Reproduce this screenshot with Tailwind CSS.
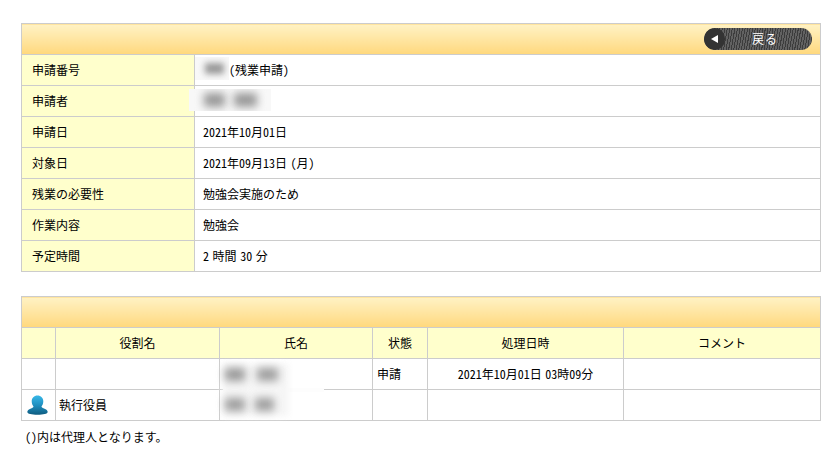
<!DOCTYPE html>
<html lang="ja">

<head>
    <meta charset="UTF-8" />
    <title>申請詳細</title>
    <script src="https://cdn.jsdelivr.net/npm/@tailwindcss/browser@4"></script>
</head>

<body class="bg-white text-black text-[12px] leading-[14px] [word-spacing:-2.4px] [font-family:'Noto_Sans_CJK_JP','Liberation_Sans',sans-serif] [font-feature-settings:'hwid']">
    <div class="w-[839px] h-[473px] overflow-hidden pt-[23px] pl-[21px]">
        <table class="w-[800px] table-fixed border-collapse">
            <colgroup>
                <col class="w-[173px]" />
                <col />
            </colgroup>
            <tr>
                <td colspan="2" class="h-[31px] p-0 border border-[#ccc] bg-gradient-to-b from-[#fff2c4] to-[#ffd87c]">
                    <div class="flex justify-end pr-[8px]">
                        <a class="flex w-[108px] h-[22px] rounded-full overflow-hidden bg-[#555] bg-[repeating-linear-gradient(100deg,#3c3c3c_0,#3c3c3c_1px,#626262_1px,#626262_2.5px)] text-white">
                            <span class="flex items-center justify-center w-[21px] h-[22px] rounded-full bg-[#333]">
                                <svg width="7" height="8" viewBox="0 0 7 8"><path d="M7 0v8L0 4z" fill="#fff" /></svg>
                            </span>
                            <span class="flex-1 text-center leading-[21px] tracking-[1px] pr-[7px]">戻る</span>
                        </a>
                    </div>
                </td>
            </tr>
            <tr>
                <td class="h-[31px] p-0 pl-[10px] border border-[#ccc] bg-[#ffc]">申請番号</td>
                <td class="relative h-[31px] p-0 pl-[8px] border border-[#ccc]">
                    <div class="absolute left-0 top-[2px] w-[34px] h-[23px] bg-[#f8f8f8] overflow-hidden">
                        <div class="mt-[6px] ml-[10px] w-[19px] h-[11px] bg-[#999] blur-[3px]"></div>
                    </div>
                    <span class="pl-[26px]">（残業申請）</span>
                </td>
            </tr>
            <tr>
                <td class="h-[31px] p-0 pl-[10px] border border-[#ccc] bg-[#ffc]">申請者</td>
                <td class="relative h-[31px] p-0 border border-[#ccc]">
                    <div class="absolute left-[-6px] top-[3px] flex gap-[9px] w-[82px] h-[22px] pl-[15px] pt-[4px] bg-[#f8f8f8] overflow-hidden">
                        <div class="w-[21px] h-[14px] bg-[#999] blur-[4px]"></div>
                        <div class="w-[23px] h-[14px] bg-[#999] blur-[4px]"></div>
                    </div>
                </td>
            </tr>
            <tr>
                <td class="h-[31px] p-0 pl-[10px] border border-[#ccc] bg-[#ffc]">申請日</td>
                <td class="h-[31px] p-0 pl-[8px] border border-[#ccc]">2021年10月01日</td>
            </tr>
            <tr>
                <td class="h-[31px] p-0 pl-[10px] border border-[#ccc] bg-[#ffc]">対象日</td>
                <td class="h-[31px] p-0 pl-[8px] border border-[#ccc]">2021年09月13日 （月）</td>
            </tr>
            <tr>
                <td class="h-[31px] p-0 pl-[10px] border border-[#ccc] bg-[#ffc]">残業の必要性</td>
                <td class="h-[31px] p-0 pl-[8px] border border-[#ccc]">勉強会実施のため</td>
            </tr>
            <tr>
                <td class="h-[31px] p-0 pl-[10px] border border-[#ccc] bg-[#ffc]">作業内容</td>
                <td class="h-[31px] p-0 pl-[8px] border border-[#ccc]">勉強会</td>
            </tr>
            <tr>
                <td class="h-[31px] p-0 pl-[10px] border border-[#ccc] bg-[#ffc]">予定時間</td>
                <td class="h-[31px] p-0 pl-[8px] border border-[#ccc]">2 時間 30 分</td>
            </tr>
        </table>

        <table class="w-[800px] table-fixed border-collapse mt-[24px]">
            <colgroup>
                <col class="w-[34px]" />
                <col class="w-[164px]" />
                <col class="w-[153px]" />
                <col class="w-[55px]" />
                <col class="w-[196px]" />
                <col />
            </colgroup>
            <tr>
                <td colspan="6" class="h-[31px] p-0 border border-[#ccc] bg-gradient-to-b from-[#fff2c4] to-[#ffd87c]"></td>
            </tr>
            <tr class="text-center">
                <td class="h-[31px] p-0 border border-[#ccc] bg-[#ffc]"></td>
                <td class="h-[31px] p-0 border border-[#ccc] bg-[#ffc]">役割名</td>
                <td class="h-[31px] p-0 border border-[#ccc] bg-[#ffc]">氏名</td>
                <td class="h-[31px] p-0 border border-[#ccc] bg-[#ffc]">状態</td>
                <td class="h-[31px] p-0 border border-[#ccc] bg-[#ffc]">処理日時</td>
                <td class="h-[31px] p-0 border border-[#ccc] bg-[#ffc]">コメント</td>
            </tr>
            <tr>
                <td class="h-[31px] p-0 border border-[#ccc]"></td>
                <td class="h-[31px] p-0 border border-[#ccc]"></td>
                <td class="relative h-[31px] p-0 border border-[#ccc]">
                    <!-- ぼかし: 2行にまたがる -->
                    <div class="absolute left-[3px] top-[29px] w-[101px] h-[4px] bg-[#fdfdfd]"></div>
                    <div class="absolute left-[3px] top-[5px] w-[66px] h-[52px] bg-[#f6f6f6] blur-[3px]"></div>
                    <div class="absolute left-[5px] top-[9px] w-[20px] h-[13px] bg-[#999] blur-[4px]"></div>
                    <div class="absolute left-[37px] top-[9px] w-[21px] h-[13px] bg-[#9e9e9e] blur-[4px]"></div>
                    <div class="absolute left-[5px] top-[39px] w-[20px] h-[13px] bg-[#9e9e9e] blur-[4px]"></div>
                    <div class="absolute left-[35px] top-[39px] w-[19px] h-[13px] bg-[#9e9e9e] blur-[4px]"></div>
                </td>
                <td class="h-[31px] p-0 pl-[4px] border border-[#ccc]">申請</td>
                <td class="h-[31px] p-0 border border-[#ccc] text-center">2021年10月01日 03時09分</td>
                <td class="h-[31px] p-0 border border-[#ccc]"></td>
            </tr>
            <tr>
                <td class="h-[31px] p-0 border border-[#ccc]">
                    <svg class="block mx-auto -translate-x-px" width="21" height="21" viewBox="0 0 21 21">
                        <defs>
                            <linearGradient id="personFill" x1="0" y1="0" x2="0" y2="1">
                                <stop offset="0" stop-color="#38b8e8" />
                                <stop offset="0.5" stop-color="#1f8fc0" />
                                <stop offset="1" stop-color="#0f5c80" />
                            </linearGradient>
                        </defs>
                        <path d="M10.500 0.500c3.400 0 5.800 2.500 5.800 5.800 0 2.500-1 4.200-1.800 5.200 0 .9 .8 1.300 2.500 1.900 2.500 .9 3.700 2.100 3.700 3.500 0 1.700-4.500 2.800-10.200 2.800s-10.200-1.100-10.200-2.800c0-1.400 1.200-2.600 3.700-3.500 1.700-.6 2.500-1 2.500-1.900-.8-1-1.800-2.700-1.800-5.200 0-3.300 2.400-5.800 5.800-5.800z" fill="url(#personFill)" />
                    </svg>
                </td>
                <td class="h-[31px] p-0 pl-[3px] border border-[#ccc]">執行役員</td>
                <td class="h-[31px] p-0 border border-[#ccc]"></td>
                <td class="h-[31px] p-0 border border-[#ccc]"></td>
                <td class="h-[31px] p-0 border border-[#ccc]"></td>
                <td class="h-[31px] p-0 border border-[#ccc]"></td>
            </tr>
        </table>
        <p class="mt-[9px] pl-[4px]">()内は代理人となります。</p>
    </div>
</body>

</html>
